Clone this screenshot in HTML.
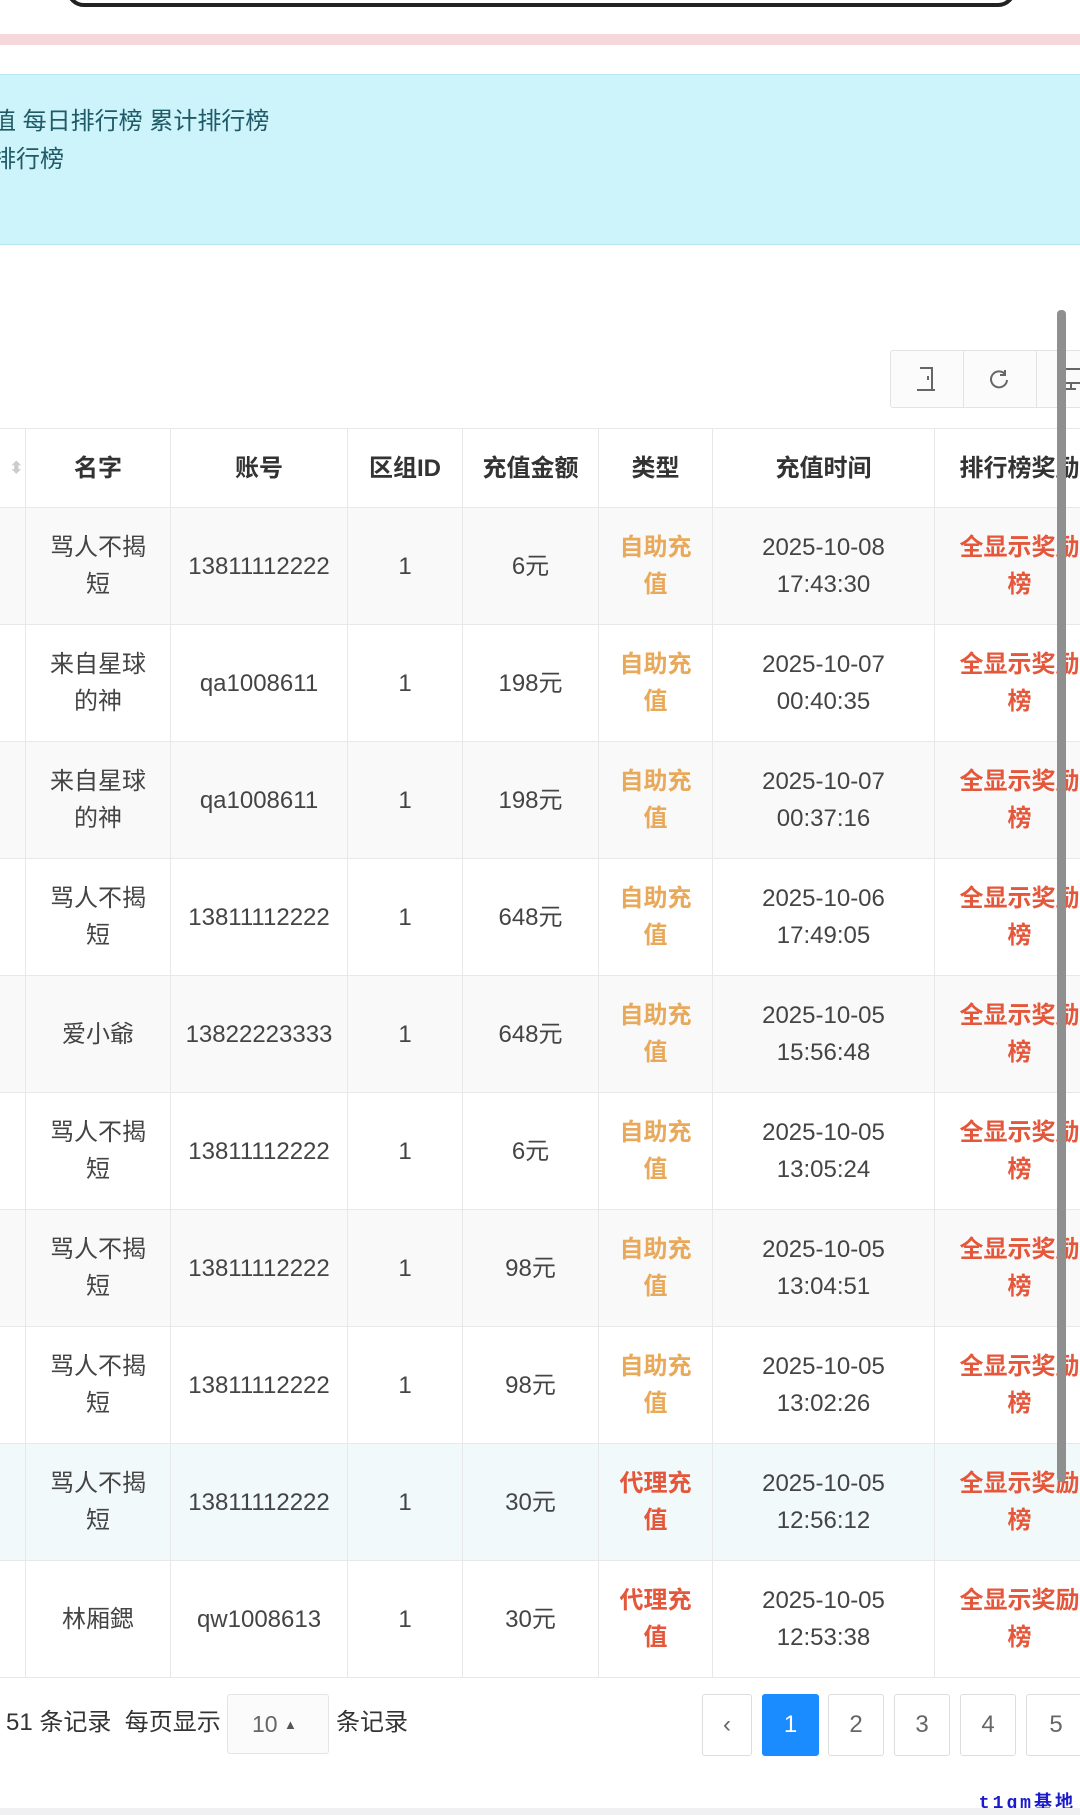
<!DOCTYPE html>
<html><head><meta charset="utf-8"><style>
*{margin:0;padding:0;box-sizing:border-box}
body{width:1080px;height:1815px;background:#fff;position:relative;overflow:hidden;font-family:"Liberation Sans","Noto Sans CJK SC",sans-serif;color:#444}
.abs{position:absolute}
table{position:absolute;left:-20px;top:428px;width:1124px;border-collapse:collapse;table-layout:fixed}
td,th{border:1px solid #e8e8e8;text-align:center;vertical-align:middle;font-size:24px;line-height:37px;padding:0 2px;overflow:hidden;white-space:normal}
th{height:79px;font-weight:bold;color:#333}
td{height:117px;color:#444}
tr.g td{background:#f9f9f9}
tr.h td{background:#f1f9fa}
.y{color:#e8a95a;font-weight:bold}
.r{color:#e4573b;font-weight:bold}
.pb{position:absolute;top:1694px;height:62px;border:1px solid #ddd;border-radius:3px;font-size:24px;color:#666;text-align:center;line-height:60px;background:#fff}
</style></head><body>
<div class="abs" style="left:66px;top:-30px;width:950px;height:37px;border:4px solid #222;border-radius:18px"></div>
<div class="abs" style="left:0;top:34px;width:1080px;height:11px;background:#f6d8dc"></div>
<div class="abs" style="left:0;top:74px;width:1080px;height:171px;background:#cdf3fb;border-top:1px solid #b8e6f0;border-bottom:1px solid #b8e6f0"></div>
<div class="abs" style="left:-8px;top:103px;font-size:24px;color:#1f5a66;line-height:38px">值 每日排行榜 累计排行榜<br>排行榜</div>
<div class="abs" style="left:890px;top:350px;width:200px;height:58px;border:1px solid #e3e3e3;border-radius:3px;background:#fbfbfb"></div>
<div class="abs" style="left:963px;top:350px;width:1px;height:58px;background:#e3e3e3"></div>
<div class="abs" style="left:1036px;top:350px;width:1px;height:58px;background:#e3e3e3"></div>
<svg class="abs" style="left:916px;top:366px" width="22" height="26"><path d="M4 2h12v22M1 24h18M12 10v4" stroke="#666" stroke-width="2" fill="none"/></svg>
<svg class="abs" style="left:988px;top:368px" width="22" height="22"><path d="M17 6A8 8 0 1 0 19 12M17 2v5h-5" stroke="#666" stroke-width="2" fill="none"/></svg>
<svg class="abs" style="left:1060px;top:366px" width="22" height="26"><rect x="1" y="3" width="20" height="14" stroke="#666" stroke-width="2" fill="none"/><path d="M11 17v5M6 23h10" stroke="#666" stroke-width="2"/></svg>
<table>
<colgroup><col style="width:45px"><col style="width:145px"><col style="width:177px"><col style="width:115px"><col style="width:136px"><col style="width:114px"><col style="width:222px"><col style="width:170px"></colgroup>
<tr><th style="color:#ccc;text-align:right;font-size:16px">⬍</th><th>名字</th><th>账号</th><th>区组ID</th><th>充值金额</th><th>类型</th><th>充值时间</th><th>排行榜奖励</th></tr>
<tr class="g"><td></td><td>骂人不揭<br>短</td><td>13811112222</td><td>1</td><td>6元</td><td class="y">自助充<br>值</td><td>2025-10-08<br>17:43:30</td><td class="r">全显示奖励<br>榜</td></tr>
<tr><td></td><td>来自星球<br>的神</td><td>qa1008611</td><td>1</td><td>198元</td><td class="y">自助充<br>值</td><td>2025-10-07<br>00:40:35</td><td class="r">全显示奖励<br>榜</td></tr>
<tr class="g"><td></td><td>来自星球<br>的神</td><td>qa1008611</td><td>1</td><td>198元</td><td class="y">自助充<br>值</td><td>2025-10-07<br>00:37:16</td><td class="r">全显示奖励<br>榜</td></tr>
<tr><td></td><td>骂人不揭<br>短</td><td>13811112222</td><td>1</td><td>648元</td><td class="y">自助充<br>值</td><td>2025-10-06<br>17:49:05</td><td class="r">全显示奖励<br>榜</td></tr>
<tr class="g"><td></td><td>爱小爺</td><td>13822223333</td><td>1</td><td>648元</td><td class="y">自助充<br>值</td><td>2025-10-05<br>15:56:48</td><td class="r">全显示奖励<br>榜</td></tr>
<tr><td></td><td>骂人不揭<br>短</td><td>13811112222</td><td>1</td><td>6元</td><td class="y">自助充<br>值</td><td>2025-10-05<br>13:05:24</td><td class="r">全显示奖励<br>榜</td></tr>
<tr class="g"><td></td><td>骂人不揭<br>短</td><td>13811112222</td><td>1</td><td>98元</td><td class="y">自助充<br>值</td><td>2025-10-05<br>13:04:51</td><td class="r">全显示奖励<br>榜</td></tr>
<tr><td></td><td>骂人不揭<br>短</td><td>13811112222</td><td>1</td><td>98元</td><td class="y">自助充<br>值</td><td>2025-10-05<br>13:02:26</td><td class="r">全显示奖励<br>榜</td></tr>
<tr class="h"><td></td><td>骂人不揭<br>短</td><td>13811112222</td><td>1</td><td>30元</td><td class="r">代理充<br>值</td><td>2025-10-05<br>12:56:12</td><td class="r">全显示奖励<br>榜</td></tr>
<tr><td></td><td>林厢鍶</td><td>qw1008613</td><td>1</td><td>30元</td><td class="r">代理充<br>值</td><td>2025-10-05<br>12:53:38</td><td class="r">全显示奖励<br>榜</td></tr>
</table>
<div class="abs" style="left:1057px;top:310px;width:9px;height:1172px;background:#8f8f8f;border-radius:4px"></div>
<div class="abs" style="left:6px;top:1708px;font-size:24px;color:#333;line-height:30px">51 条记录&nbsp; 每页显示</div>
<div class="abs" style="left:227px;top:1694px;width:102px;height:60px;border:1px solid #e5e5e5;border-radius:3px;background:#fbfbfb;font-size:23px;color:#666;line-height:58px;padding-left:24px">10 <span style="font-size:13px;color:#555;vertical-align:3px">▲</span></div>
<div class="abs" style="left:336px;top:1708px;font-size:24px;color:#333;line-height:30px">条记录</div>
<div class="pb" style="left:702px;width:50px">‹</div>
<div class="pb" style="left:762px;width:57px;background:#1a8cff;border-color:#1a8cff;color:#fff">1</div>
<div class="pb" style="left:828px;width:56px">2</div>
<div class="pb" style="left:894px;width:56px">3</div>
<div class="pb" style="left:960px;width:56px">4</div>
<div class="pb" style="left:1026px;width:60px">5</div>
<div class="abs" style="right:4px;top:1788px;font-size:18px;font-weight:bold;color:#1a1acc;letter-spacing:3px;font-family:'Liberation Mono','Noto Sans CJK SC',monospace">t1gm基地</div>
<div class="abs" style="left:0;top:1808px;width:1080px;height:7px;background:#f0f0f2"></div>
</body></html>
